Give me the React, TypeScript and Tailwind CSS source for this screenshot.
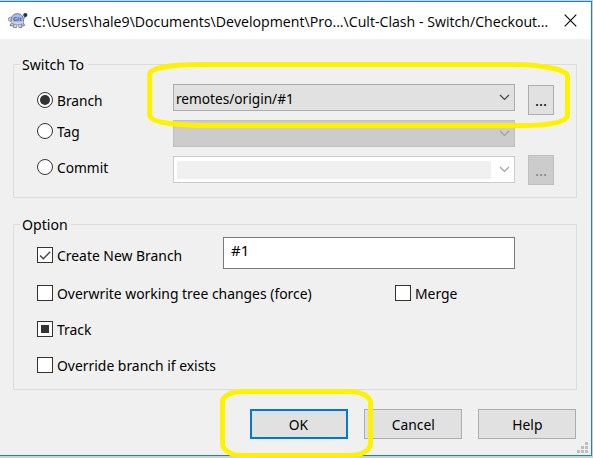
import type { ReactNode } from "react";

const chevron = (color: string) => (
  <svg width="11" height="7" viewBox="0 0 11 7" className="shrink-0">
    <path d="M1 1 L5.5 5.5 L10 1" fill="none" stroke={color} strokeWidth="1.2" />
  </svg>
);

function Radio({ label, checked }: { label: string; checked?: boolean }) {
  return (
    <label className="flex h-6 items-center gap-[4px]">
      <span className="flex size-4 items-center justify-center rounded-full border border-[#333] bg-white">
        {checked && <span className="size-[10px] rounded-full bg-[#333]" />}
      </span>
      <span className="origin-left scale-x-[.915] leading-6">{label}</span>
    </label>
  );
}

function Check({ label, children }: { label: string; children?: ReactNode }) {
  return (
    <label className="flex h-6 items-center gap-[4px]">
      <span className="flex size-4 items-center justify-center border border-[#333] bg-white">{children}</span>
      <span className="origin-left scale-x-[.927] whitespace-nowrap leading-6">{label}</span>
    </label>
  );
}

function Group({ title, className, children }: { title: string; className: string; children: ReactNode }) {
  return (
    <fieldset className={"ml-[13px] w-[564px] border border-[#dcdcdc] " + className}>
      <legend className="ml-[6px] h-[19px] pl-[2px] leading-[19px]">
        <span className="inline-block origin-left scale-x-[.94]">{title}</span>
      </legend>
      {children}
    </fieldset>
  );
}

function PushButton({ children, primary }: { children: string; primary?: boolean }) {
  return (
    <button
      className={
        "flex h-[30px] w-[98px] items-center justify-center bg-[#e1e1e1] leading-6 " +
        (primary ? "border-2 border-[#0078d7]" : "border border-[#adadad]")
      }
    >
      <span className="scale-x-[.92]">{children}</span>
    </button>
  );
}

export default function App() {
  return (
    <div className="relative h-[458px] w-[593px] overflow-hidden bg-[#d0d0d0] pt-px font-['Noto_Sans',sans-serif] text-[15px] text-black">
      <div className="flex h-[455px] w-[592px] flex-col border-y border-r border-[#1a80d0] bg-[#f0f0f0]">
        <header className="flex h-[37px] shrink-0 items-center bg-white pl-2">
          <svg width="20" height="17" viewBox="0 0 20 17" className="shrink-0">
            <path d="M4 10 L2 13.5 L4.5 14 L7 12 M13 12 L14 14 L16.5 13.5 L15 10" fill="#c9c9ce" stroke="#77777d" />
            <path d="M6 12 L5.5 15.5 H8.5 L9 12.5 M10.5 12.5 L11 15.5 H14 L13 12" fill="#dcdce0" stroke="#808088" strokeWidth=".9" />
            <ellipse cx="2.4" cy="7.2" rx="2.1" ry="2" fill="#d0d0d6" stroke="#85858c" strokeWidth=".8" />
            <path d="M3 9.5 C3 4 5.5 1.7 9.5 1.7 C13.7 1.7 15.5 5 15.5 9.5 L13 12 H5.5 Z" fill="#a9bdec" stroke="#68759a" />
            <path d="M3.3 9.8 C6 12 13 12 15.3 9.8" fill="none" stroke="#d4d6de" strokeWidth="1.4" />
            <text x="5" y="8.7" fontSize="6" fontWeight="bold" fill="#435c9b">Git</text>
            <path d="M15 7.5 L17.5 4" stroke="#999" strokeWidth="1.6" />
            <circle cx="17.3" cy="3" r="2.1" fill="#17384e" />
          </svg>
          <h1 className="ml-[5px] w-[524px] shrink-0 origin-left scale-x-[.943] whitespace-nowrap font-['Open_Sans',sans-serif] text-[15px] leading-6">
            C:\Users\hale9\Documents\Development\Pro...\Cult-Clash - Switch/Checkout...
          </h1>
          <svg width="13" height="13" viewBox="0 0 13 13" className="ml-[7px] shrink-0">
            <path d="M.7 .7 L12.3 12.3 M12.3 .7 L.7 12.3" stroke="#000" strokeWidth="1.1" />
          </svg>
        </header>

        <Group title="Switch To" className="mt-4 h-[143px] shrink-0">
          <div className="flex items-start">
            <div className="ml-[23px] mt-[14px] flex w-[136px] flex-col">
              <Radio label="Branch" checked />
              <div className="mt-[7px]"><Radio label="Tag" /></div>
              <div className="mt-3"><Radio label="Commit" /></div>
            </div>
            <div className="mt-[10px] flex w-[342px] flex-col gap-[9px]">
              <div className="flex h-[27px] items-center justify-between border border-[#adadad] bg-[#e1e1e1] pl-[2px] pr-[4px]">
                <span className="origin-left scale-x-[.91] leading-6">remotes/origin/#1</span>
                {chevron("#444")}
              </div>
              <div className="flex h-[27px] items-center justify-end border border-[#bfbfbf] bg-[#ccc] pr-[4px]">
                {chevron("#a0a0a0")}
              </div>
              <div className="flex h-[27px] items-center justify-between border border-[#ccc] bg-white pl-[3px] pr-[4px]">
                <span className="h-[18px] w-[314px] bg-[#f0f0f0]" />
                {chevron("#a0a0a0")}
              </div>
            </div>
            <div className="ml-[13px] mt-[11px] flex flex-col gap-10">
              <button className="flex h-[30px] w-[26px] items-center justify-center border border-[#adadad] bg-[#e1e1e1]">...</button>
              <button className="flex h-[30px] w-[26px] items-center justify-center border border-[#bfbfbf] bg-[#ccc] text-[#838383]">...</button>
            </div>
          </div>
        </Group>

        <Group title="Option" className="mt-[17px] h-[175px] shrink-0">
          <div className="pl-[23px]">
            <div className="flex h-[35px] items-end">
              <div className="mb-[2px] mr-auto">
                <Check label="Create New Branch">
                  <svg width="14" height="14" viewBox="0 0 14 14">
                    <path d="M2 7.5 L5.3 10.8 L12.2 3.8" fill="none" stroke="#444" strokeWidth="1.4" />
                  </svg>
                </Check>
              </div>
              <div className="mr-[61px] h-8 w-[292px] border border-[#7a7a7a] bg-white pl-[7px] leading-6">#1</div>
            </div>
            <div className="mt-3 flex">
              <div className="w-[358px]"><Check label="Overwrite working tree changes (force)" /></div>
              <Check label="Merge" />
            </div>
            <div className="mt-3">
              <Check label="Track"><span className="size-2 bg-[#333]" /></Check>
            </div>
            <div className="mt-3"><Check label="Override branch if exists" /></div>
          </div>
        </Group>

        <div className="ml-[250px] mt-[19px] flex gap-4">
          <PushButton primary>OK</PushButton>
          <PushButton>Cancel</PushButton>
          <PushButton>Help</PushButton>
        </div>
      </div>

      <svg width="11" height="11" viewBox="0 0 11 11" className="absolute left-[577px] top-[442px]" fill="#bfbfbf">
        <path d="M8 0h3v3h-3z M4 4h3v3h-3z M8 4h3v3h-3z M0 8h3v3h-3z M4 8h3v3h-3z M8 8h3v3h-3z" />
      </svg>

      <svg width="593" height="458" className="pointer-events-none absolute inset-0" fill="none" stroke="#fff200" strokeWidth="5">
        <path d="M149.7 74 C149.7 68 170 64.5 200 64.5 H515 C545 65 567.5 70 567.5 76 V115 C567.5 122 550 125.5 520 125.5 H200 C165 124 149.7 121 149.7 115 Z" />
        <path d="M222.5 402 C222.5 396 231 391.5 242 391.5 H350 C362 391.5 370.5 397 370.5 403 V443 C370.5 450 362 455.5 350 455.5 H242 C231 455.5 222.5 450 222.5 443 Z" />
      </svg>
    </div>
  );
}
